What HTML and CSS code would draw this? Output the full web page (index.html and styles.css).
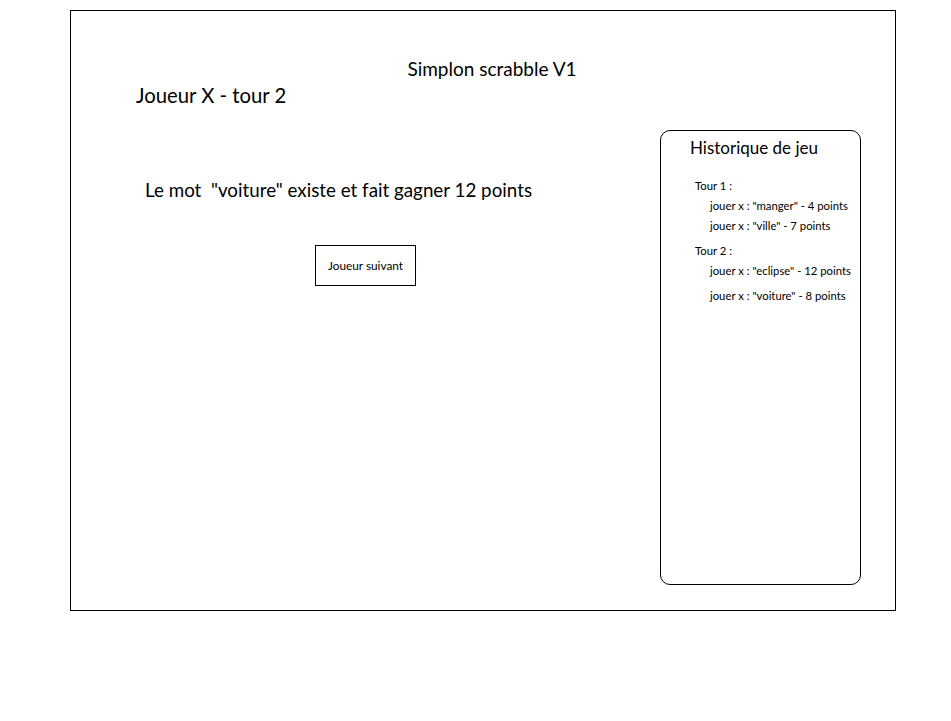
FILE: index.html
```html
<!DOCTYPE html>
<html lang="fr">
<head>
<meta charset="utf-8">
<title>Simplon scrabble V1</title>
<link rel="stylesheet" href="styles.css">
</head>
<body>
<div class="frame">
  <div class="title">Simplon scrabble V1</div>
  <div class="player">Joueur X - tour 2</div>
  <div class="main">
    <div class="left">
      <p class="message">Le mot &nbsp;"voiture" existe et fait gagner 12 points</p>
      <button class="next">Joueur suivant</button>
    </div>
    <aside class="history">
      <h2 class="history-title">Historique de jeu</h2>
      <div class="round">Tour 1 :</div>
      <div class="entry">jouer x : "manger" - 4 points</div>
      <div class="entry">jouer x : "ville" - 7 points</div>
      <div class="round round-next">Tour 2 :</div>
      <div class="entry">jouer x : "eclipse" - 12 points</div>
      <div class="entry entry-last">jouer x : "voiture" - 8 points</div>
    </aside>
  </div>
</div>
</body>
</html>
```
FILE: styles.css
```css
* { box-sizing: border-box; }
body {
  margin: 0;
  background: #fff;
  font-family: Lato, "Liberation Sans", sans-serif;
  color: #000;
}
.frame {
  margin: 10px 0 0 70px;
  width: 826px;
  height: 601px;
  border: 1px solid #000;
}
.title {
  padding: 47px 0 0 18px;
  text-align: center;
  font-size: 19px;
  line-height: 22px;
}
.player {
  margin: 3px 0 0 65px;
  font-size: 20.3px;
  line-height: 24px;
}
.main {
  display: grid;
  grid-template-columns: 589px 201px;
  margin-top: 23px;
}
.left {
  display: flex;
  flex-direction: column;
  align-items: flex-start;
}
.message {
  margin: 48px 0 0 74px;
  font-size: 18.8px;
  line-height: 24px;
}
.next {
  margin: 43px 0 0 244px;
  width: 101px;
  height: 41px;
  border: 1px solid #000;
  background: #fff;
  font-family: inherit;
  font-size: 11.8px;
  color: #000;
  padding: 0;
}
.history {
  height: 455px;
  border: 1px solid #000;
  border-radius: 10px;
  padding: 7px 0 0 29px;
  display: flex;
  flex-direction: column;
  align-items: flex-start;
  gap: 6px;
}
.history-title {
  margin: 0 0 15px;
  font-size: 17px;
  font-weight: normal;
  line-height: 20px;
}
.round {
  margin-left: 5px;
  font-size: 11.3px;
  line-height: 14px;
}
.entry {
  margin-left: 20px;
  font-size: 11.3px;
  line-height: 14px;
  white-space: nowrap;
}
.round-next, .entry-last { margin-top: 5px; }
```
